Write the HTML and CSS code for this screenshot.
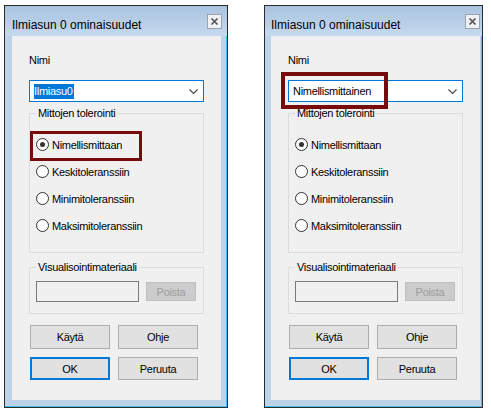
FILE: index.html
```html
<!DOCTYPE html>
<html lang="fi">
<head>
<meta charset="utf-8">
<title>Ilmiasun 0 ominaisuudet</title>
<link rel="stylesheet" href="styles.css">
</head>
<body>
<div class="screen">
  <section class="dialog dialog--left">
    <header class="titlebar">
      <span class="title">Ilmiasun 0 ominaisuudet</span>
      <span class="close"><svg width="9" height="9" viewBox="0 0 9 9"><path d="M1.5 1.5 L7.5 7.5 M7.5 1.5 L1.5 7.5" stroke="#555" stroke-width="1.7" fill="none"/></svg></span>
    </header>
    <div class="client">
      <div class="field-label">Nimi</div>
      <div class="combo">
        <span class="combo-text"><span class="sel">Ilmiasu0</span></span>
        <svg class="chev" width="9" height="5" viewBox="0 0 9 5"><path d="M0.5 0.5 L4.5 4.5 L8.5 0.5" stroke="#444" stroke-width="1.1" fill="none"/></svg>
      </div>
      <fieldset class="group group--tol">
        <legend>Mittojen tolerointi</legend>
        <div class="radios">
          <div class="radio"><span class="dot dot--checked"></span>Nimellismittaan</div>
          <div class="radio"><span class="dot"></span>Keskitoleranssiin</div>
          <div class="radio"><span class="dot"></span>Minimitoleranssiin</div>
          <div class="radio"><span class="dot"></span>Maksimitoleranssiin</div>
        </div>
      </fieldset>
      <fieldset class="group group--vis">
        <legend>Visualisointimateriaali</legend>
        <div class="vis-row">
          <span class="textbox"></span>
          <span class="btn btn--disabled">Poista</span>
        </div>
      </fieldset>
      <div class="buttons">
        <span class="btn">Käytä</span>
        <span class="btn">Ohje</span>
        <span class="btn btn--default">OK</span>
        <span class="btn">Peruuta</span>
      </div>
    </div>
    <div class="highlight highlight--radio"></div>
  </section>

  <section class="dialog dialog--right">
    <header class="titlebar">
      <span class="title">Ilmiasun 0 ominaisuudet</span>
      <span class="close"><svg width="9" height="9" viewBox="0 0 9 9"><path d="M1.5 1.5 L7.5 7.5 M7.5 1.5 L1.5 7.5" stroke="#555" stroke-width="1.7" fill="none"/></svg></span>
    </header>
    <div class="client">
      <div class="field-label">Nimi</div>
      <div class="combo">
        <span class="combo-text">Nimellismittainen</span>
        <svg class="chev" width="9" height="5" viewBox="0 0 9 5"><path d="M0.5 0.5 L4.5 4.5 L8.5 0.5" stroke="#444" stroke-width="1.1" fill="none"/></svg>
      </div>
      <fieldset class="group group--tol">
        <legend>Mittojen tolerointi</legend>
        <div class="radios">
          <div class="radio"><span class="dot dot--checked"></span>Nimellismittaan</div>
          <div class="radio"><span class="dot"></span>Keskitoleranssiin</div>
          <div class="radio"><span class="dot"></span>Minimitoleranssiin</div>
          <div class="radio"><span class="dot"></span>Maksimitoleranssiin</div>
        </div>
      </fieldset>
      <fieldset class="group group--vis">
        <legend>Visualisointimateriaali</legend>
        <div class="vis-row">
          <span class="textbox"></span>
          <span class="btn btn--disabled">Poista</span>
        </div>
      </fieldset>
      <div class="buttons">
        <span class="btn">Käytä</span>
        <span class="btn">Ohje</span>
        <span class="btn btn--default">OK</span>
        <span class="btn">Peruuta</span>
      </div>
    </div>
    <div class="highlight highlight--combo"></div>
  </section>
</div>
</body>
</html>
```

FILE: styles.css
```css
* { box-sizing: border-box; }

html, body {
  margin: 0;
  padding: 0;
  background: #ffffff;
}

body {
  font-family: "Liberation Sans", Arial, sans-serif;
  font-size: 11px;
  color: #000;
}

.screen {
  display: flex;
  align-items: flex-start;
  gap: 36px;
  padding: 5px 0 0 4px;
}

.dialog {
  position: relative;
  width: 224px;
  height: 403px;
  border: 1px solid #2b2b2b;
  background: #bcd3ea;
  box-shadow: inset -1px -1px 0 #3ac4ee;
  display: flex;
  flex-direction: column;
}

.dialog--right {
  width: 219px;
}

.titlebar {
  height: 30px;
  flex: none;
  display: flex;
  align-items: flex-start;
  justify-content: space-between;
  padding: 0 5px 0 7px;
  background: linear-gradient(#a9c3df, #c6d9ee);
}

.dialog--right .titlebar {
  padding: 0 2px 0 6px;
}

.title {
  font-size: 12px;
  line-height: 16px;
  padding-top: 11px;
}

.close {
  margin-top: 8px;
  width: 15px;
  height: 15px;
  border: 1px solid #9aa3ae;
  background: #eef1f5;
  display: flex;
  align-items: center;
  justify-content: center;
}

.close svg { display: block; }

.client {
  flex: none;
  height: 364px;
  margin: 0 6px 0 7px;
  padding-left: 17px;
  background: #f0f0f0;
  letter-spacing: -0.3px;
}

.dialog--right .client {
  margin: 0 2px 0 6px;
}

.field-label {
  margin-top: 18px;
  line-height: 13px;
}

.combo {
  margin-top: 13px;
  width: 175px;
  height: 22px;
  border: 1px solid #0078d7;
  background: #fff;
  display: flex;
  align-items: center;
  padding: 0 5px 0 3px;
}

.combo-text {
  line-height: 15px;
  padding-left: 1px;
}

.sel {
  display: inline-block;
  background: #0078d7;
  color: #fff;
  padding: 0 1px 0 0;
  line-height: 15px;
}

.chev {
  display: block;
  margin-left: auto;
}

.group {
  width: 175px;
  min-width: 0;
  margin: 5px 0 0;
  padding: 0;
  border: 1px solid #dcdcdc;
}

.group legend {
  margin-left: 6px;
  padding: 0 2px;
  line-height: 13px;
}

.radios {
  padding: 11px 0 13px 6px;
}

.radio {
  height: 27px;
  display: flex;
  align-items: center;
  gap: 3px;
}

.dot {
  width: 13px;
  height: 13px;
  border: 1px solid #333;
  border-radius: 50%;
  background: #fff;
  display: flex;
  align-items: center;
  justify-content: center;
}

.dot--checked::after {
  content: "";
  width: 5px;
  height: 5px;
  border-radius: 50%;
  background: #333;
}

.group--vis {
  margin-top: 8px;
}

.vis-row {
  display: flex;
  align-items: center;
  gap: 7px;
  padding: 7px 0 11px 6px;
}

.textbox {
  width: 103px;
  height: 21px;
  border: 1px solid #7a7a7a;
  background: #f0f0f0;
}

.btn {
  display: flex;
  align-items: center;
  justify-content: center;
  border: 1px solid #adadad;
  background: #e1e1e1;
}

.btn--disabled {
  width: 50px;
  height: 19px;
  background: #cccccc;
  border-color: #bfbfbf;
  color: #9d9d9d;
}

.btn--default {
  border: 2px solid #0078d7;
}

.buttons {
  margin-top: 11px;
  padding-left: 1px;
  display: grid;
  grid-template-columns: 80px 80px;
  grid-template-rows: 24px 23px;
  gap: 8px;
}

.highlight {
  position: absolute;
  border: 3px solid #770b0b;
  pointer-events: none;
}

.highlight--radio {
  left: 25px;
  top: 125px;
  width: 112px;
  height: 30px;
}

.highlight--combo {
  left: 16px;
  top: 66px;
  width: 107px;
  height: 37px;
  border-width: 4px;
}
```
